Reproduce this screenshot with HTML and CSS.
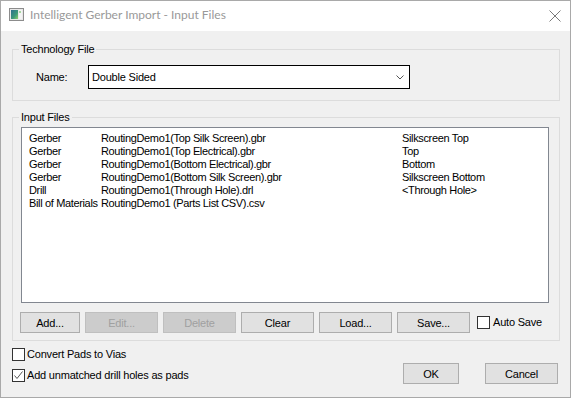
FILE: index.html
```html
<!DOCTYPE html>
<html lang="en">
<head>
  <meta charset="UTF-8" />
  <title>Intelligent Gerber Import - Input Files</title>
  <link rel="stylesheet" href="styles.css">
</head>
<body>
  <div class="window">
    <div class="titlebar">
      <svg class="app-icon" viewBox="0 0 15 13">
        <defs>
          <linearGradient id="screen" x1="0" y1="0" x2="1" y2="1">
            <stop offset="0" stop-color="#2f6f8f" />
            <stop offset="0.6" stop-color="#3d9a7a" />
            <stop offset="1" stop-color="#8fd06a" />
          </linearGradient>
        </defs>
        <rect x="0.5" y="0.5" width="14" height="12" fill="#e8e8e8" stroke="#8c8c8c" />
        <rect x="2" y="2" width="7" height="9" fill="url(#screen)" />
        <rect x="10" y="2" width="3" height="9" fill="#f4f4f4" />
        <rect x="10" y="3" width="2" height="2" fill="#a6d8a0" />
      </svg>
      <span class="title">Intelligent Gerber Import - Input Files</span>
      <svg class="close" viewBox="0 0 12 12">
        <path d="M0.5 0.5 L11.5 11.5 M11.5 0.5 L0.5 11.5" stroke="#7a7a7a" stroke-width="1" fill="none" />
      </svg>
    </div>

    <div class="content">
      <fieldset class="group tech">
        <legend>Technology File</legend>
        <div class="name-row">
          <label>Name:</label>
          <div class="combo">
            <span>Double Sided</span>
            <svg class="chevron" viewBox="0 0 8 5">
              <path d="M0.5 0.5 L4 4 L7.5 0.5" stroke="#555" stroke-width="1" fill="none" />
            </svg>
          </div>
        </div>
      </fieldset>

      <fieldset class="group files">
        <legend>Input Files</legend>
        <div class="files-body">
          <div class="listbox">
            <div class="row"><span class="c1">Gerber</span><span class="c2">RoutingDemo1(Top Silk Screen).gbr</span><span>Silkscreen Top</span></div>
            <div class="row"><span class="c1">Gerber</span><span class="c2">RoutingDemo1(Top Electrical).gbr</span><span>Top</span></div>
            <div class="row"><span class="c1">Gerber</span><span class="c2">RoutingDemo1(Bottom Electrical).gbr</span><span>Bottom</span></div>
            <div class="row"><span class="c1">Gerber</span><span class="c2">RoutingDemo1(Bottom Silk Screen).gbr</span><span>Silkscreen Bottom</span></div>
            <div class="row"><span class="c1">Drill</span><span class="c2">RoutingDemo1(Through Hole).drl</span><span>&lt;Through Hole&gt;</span></div>
            <div class="row"><span class="c1">Bill of Materials</span><span class="c2">RoutingDemo1 (Parts List CSV).csv</span><span></span></div>
          </div>
          <div class="buttons">
            <button class="btn add">Add...</button>
            <button class="btn" disabled>Edit...</button>
            <button class="btn" disabled>Delete</button>
            <button class="btn">Clear</button>
            <button class="btn">Load...</button>
            <button class="btn">Save...</button>
            <label class="check auto-save"><span class="box"></span>Auto Save</label>
          </div>
        </div>
      </fieldset>

      <div class="footer">
        <div class="checks">
          <label class="check"><span class="box"></span>Convert Pads to Vias</label>
          <label class="check">
            <span class="box">
              <svg viewBox="0 0 11 11"><path d="M1.5 5.5 L4 8.5 L9.5 1.5" stroke="#555" stroke-width="1" fill="none" /></svg>
            </span>Add unmatched drill holes as pads
          </label>
        </div>
        <div class="actions">
          <button class="btn ok">OK</button>
          <button class="btn">Cancel</button>
        </div>
      </div>
    </div>
  </div>
</body>
</html>
```

FILE: styles.css
```css
* {
  box-sizing: border-box;
}
body {
  margin: 0;
  font-family: "Liberation Sans", Arial, sans-serif;
  font-size: 11px;
  letter-spacing: -0.2px;
  color: #000;
  background: #f0f0f0;
}
.window {
  width: 571px;
  height: 398px;
  border: 1px solid #a9a9a9;
  background: #f0f0f0;
}
.titlebar {
  height: 30px;
  background: #ffffff;
  display: flex;
  align-items: flex-start;
  padding: 0 9px 0 8px;
}
.app-icon {
  width: 15px;
  height: 13px;
  margin-top: 7px;
}
.title {
  flex: 1;
  margin: 6px 0 0 6px;
  font-family: Lato, "Liberation Sans", sans-serif;
  font-size: 12px;
  letter-spacing: 0;
  line-height: 16px;
  color: #999999;
}
.close {
  width: 12px;
  height: 12px;
  margin-top: 9px;
}
.content {
  padding: 0 10px 0 11px;
}
.group {
  margin: 0;
  padding: 0;
  min-width: 0;
  border: 1px solid #dcdcdc;
}
.group legend {
  padding: 0 2px;
  margin-left: 6px;
  line-height: 13px;
}
.tech {
  margin-top: 12px;
}
.name-row {
  display: flex;
  align-items: center;
  padding: 9px 0 11px 23px;
}
.name-row label {
  width: 52px;
}
.combo {
  width: 322px;
  height: 24px;
  border: 1px solid #000;
  background: #ffffff;
  display: flex;
  align-items: center;
  padding: 0 5px 0 3px;
}
.combo span {
  flex: 1;
}
.chevron {
  width: 8px;
  height: 5px;
}
.files {
  margin-top: 10px;
}
.files-body {
  padding: 3px 10px 7px 8px;
}
.listbox {
  height: 176px;
  border: 1px solid #828790;
  background: #ffffff;
  padding: 4px 0 0 7px;
}
.row {
  display: flex;
  line-height: 13px;
  letter-spacing: -0.35px;
  white-space: nowrap;
}
.c1 {
  width: 72px;
}
.c2 {
  width: 301px;
}
.buttons {
  display: flex;
  align-items: center;
  gap: 5px;
  margin: 9px 0 0 -1px;
}
.btn {
  width: 73px;
  height: 21px;
  padding: 0;
  border: 1px solid #adadad;
  background: #e1e1e1;
  font-family: "Liberation Sans", Arial, sans-serif;
  font-size: 11px;
  letter-spacing: -0.2px;
  color: #000;
}
.btn:disabled {
  background: #cccccc;
  border-color: #bfbfbf;
  color: #a0a0a0;
}
.btn.add {
  width: 60px;
}
.btn.ok {
  width: 56px;
}
.check {
  display: flex;
  align-items: center;
  gap: 2px;
  line-height: 13px;
}
.box {
  width: 13px;
  height: 13px;
  border: 1px solid #333333;
  background: #ffffff;
  display: flex;
}
.box svg {
  width: 11px;
  height: 11px;
}
.auto-save {
  margin-left: 2px;
  gap: 3px;
}
.footer {
  display: flex;
  justify-content: space-between;
  padding-top: 7px;
}
.checks {
  display: flex;
  flex-direction: column;
  gap: 8px;
}
.actions {
  display: flex;
  gap: 26px;
  margin: 15px 2px 0 0;
}
```
